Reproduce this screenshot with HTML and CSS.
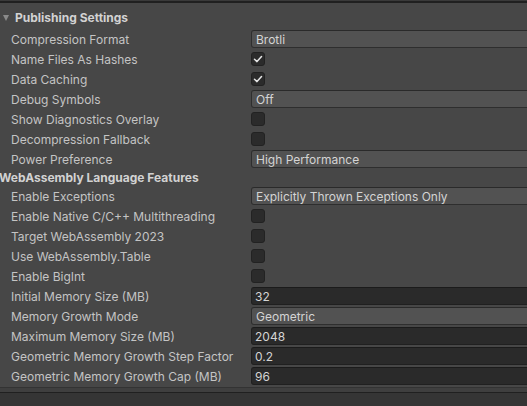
FILE: index.html
```html
<!DOCTYPE html>
<html>
<head>
<meta charset="utf-8">
<link rel="stylesheet" href="styles.css">
</head>
<body>
<div class="panel">
  <div class="topline"></div>
  <div class="header first"><span class="tri"></span>Publishing Settings</div>
  <div class="rows">
    <div class="row"><div class="label">Compression Format</div><div class="field dropdown">Brotli</div></div>
    <div class="row"><div class="label">Name Files As Hashes</div><div class="field"><span class="check on"><svg viewBox="0 0 14 14" width="14" height="14"><polyline points="3.5,7.3 6,9.6 10.5,4.6" fill="none" stroke="#e6e6e6" stroke-width="1.5" stroke-linecap="round" stroke-linejoin="round"/></svg></span></div></div>
    <div class="row"><div class="label">Data Caching</div><div class="field"><span class="check on"><svg viewBox="0 0 14 14" width="14" height="14"><polyline points="3.5,7.3 6,9.6 10.5,4.6" fill="none" stroke="#e6e6e6" stroke-width="1.5" stroke-linecap="round" stroke-linejoin="round"/></svg></span></div></div>
    <div class="row"><div class="label">Debug Symbols</div><div class="field dropdown">Off</div></div>
    <div class="row"><div class="label">Show Diagnostics Overlay</div><div class="field"><span class="check"></span></div></div>
    <div class="row"><div class="label">Decompression Fallback</div><div class="field"><span class="check"></span></div></div>
    <div class="row"><div class="label">Power Preference</div><div class="field dropdown">High Performance</div></div>
  </div>
  <div class="header second">WebAssembly Language Features</div>
  <div class="rows">
    <div class="row"><div class="label">Enable Exceptions</div><div class="field dropdown">Explicitly Thrown Exceptions Only</div></div>
    <div class="row"><div class="label">Enable Native C/C++ Multithreading</div><div class="field"><span class="check"></span></div></div>
    <div class="row"><div class="label">Target WebAssembly 2023</div><div class="field"><span class="check"></span></div></div>
    <div class="row"><div class="label">Use WebAssembly.Table</div><div class="field"><span class="check"></span></div></div>
    <div class="row"><div class="label">Enable BigInt</div><div class="field"><span class="check"></span></div></div>
    <div class="row"><div class="label">Initial Memory Size (MB)</div><div class="field text">32</div></div>
    <div class="row"><div class="label">Memory Growth Mode</div><div class="field dropdown">Geometric</div></div>
    <div class="row"><div class="label">Maximum Memory Size (MB)</div><div class="field text">2048</div></div>
    <div class="row"><div class="label">Geometric Memory Growth Step Factor</div><div class="field text">0.2</div></div>
    <div class="row"><div class="label">Geometric Memory Growth Cap (MB)</div><div class="field text">96</div></div>
  </div>
  <div class="footer">
    <div class="fline1"></div>
    <div class="fband"></div>
    <div class="fline2"></div>
    <div class="fbar"></div>
  </div>
</div>
</body>
</html>
```

FILE: styles.css
```css
html, body {
  margin: 0;
  padding: 0;
  background: #474747;
  overflow: hidden;
  width: 527px;
  height: 406px;
}
.panel {
  width: 527px;
  height: 406px;
  display: flex;
  flex-direction: column;
  font-family: Inter, "Noto Sans", sans-serif;
  font-size: 12px;
  color: #c4c4c4;
}
.topline {
  height: 3px;
  border-top: 1px solid #3a3a3a;
  background: #202020;
  box-sizing: border-box;
}
.header {
  display: flex;
  align-items: center;
  font-weight: 700;
  color: #d2d2d2;
}
.header.first {
  height: 20px;
  margin-top: 4px;
  margin-bottom: 2px;
  padding-left: 3px;
}
.header.second {
  height: 17px;
  padding-left: 0;
  margin-left: -1px;
}
.tri {
  width: 0;
  height: 0;
  border-left: 3.5px solid transparent;
  border-right: 3.5px solid transparent;
  border-top: 6px solid #8a8a8a;
  margin-right: 6px;
  margin-top: 1px;
}
.rows {
  display: flex;
  flex-direction: column;
}
.row {
  height: 20px;
  display: flex;
  align-items: center;
}
.label {
  width: 240px;
  padding-left: 11px;
  white-space: nowrap;
  overflow: hidden;
}
.field {
  flex: 1;
  margin-right: -6px;
  display: flex;
  align-items: center;
  height: 18px;
  box-sizing: border-box;
  white-space: nowrap;
  color: #d4d4d4;
}
.dropdown {
  background: #525252;
  border: 1px solid #2e2e2e;
  border-top-color: #2a2a2a;
  border-radius: 3px;
  padding-left: 4px;
}
.text {
  background: #2a2a2a;
  border: 1px solid #202020;
  border-top-color: #1b1b1b;
  border-radius: 3px;
  padding-left: 3px;
}
.check {
  width: 14px;
  height: 14px;
  box-sizing: border-box;
  background: #2b2b2b;
  border: 1px solid #222222;
  border-radius: 3px;
  display: flex;
  align-items: center;
  justify-content: center;
}
.check svg {
  display: block;
  margin: -1px;
}
.footer {
  display: flex;
  flex-direction: column;
  flex: 1;
}
.fline1 {
  height: 1px;
  margin-top: 1px;
  background: #333333;
}
.fband {
  height: 4px;
  background: #3f3f3f;
}
.fline2 {
  height: 1px;
  background: #202020;
}
.fbar {
  flex: 1;
  background: #353535;
}
```
